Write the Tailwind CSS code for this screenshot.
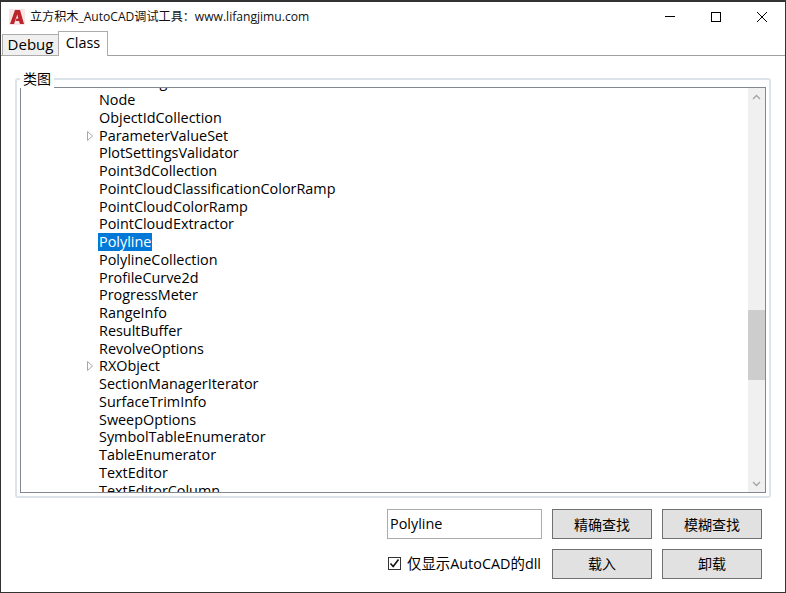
<!DOCTYPE html>
<html lang="zh-CN">
<head>
<meta charset="UTF-8">
<title>立方积木_AutoCAD调试工具</title>
<script src="https://cdn.jsdelivr.net/npm/@tailwindcss/browser@4"></script>
</head>
<body class="bg-white">
<div class="w-[786px] h-[593px] flex flex-col overflow-hidden bg-white border border-[#333] border-t-2 text-[14.4px] text-black font-['Open_Sans','Noto_Sans_CJK_SC',sans-serif]">

  <!-- title bar -->
  <div class="h-[30px] shrink-0 flex items-center">
    <svg class="ml-[8px] w-[16px] h-[16px]" viewBox="0 0 16 16"><rect width="16" height="16" rx="1" fill="#f8e4e4"/><path d="M1 15 L6 1 H11 L15 15 H11 L10 12 H6.5 L7.5 9.5 H9.3 L8.3 5.5 L5 15 Z" fill="#b8262c"/></svg>
    <span class="ml-[5px] text-[12.1px] leading-none text-[#111]">立方积木_AutoCAD调试工具：www.lifangjimu.com</span>
    <div class="ml-auto flex items-center h-full">
      <div class="w-[46px] flex justify-center"><svg class="w-[12px] h-[12px]" viewBox="0 0 12 12"><path d="M1 5.5H11" stroke="#000" fill="none"/></svg></div>
      <div class="w-[46px] flex justify-center"><svg class="w-[12px] h-[12px]" viewBox="0 0 12 12"><rect x="1.5" y="1.5" width="9" height="9" stroke="#000" fill="none"/></svg></div>
      <div class="w-[46px] flex justify-center"><svg class="w-[12px] h-[12px]" viewBox="0 0 12 12"><path d="M1 1L11 11M11 1L1 11" stroke="#000" fill="none"/></svg></div>
    </div>
  </div>

  <!-- tabs -->
  <div class="h-[24px] shrink-0 flex items-end pl-[1px] border-b border-[#a0a0a0]">
    <div class="w-[57px] h-[22px] -mb-px flex items-center justify-center pb-[2px] bg-[#f0f0f0] border border-[#acacac] text-[15px] leading-none">Debug</div>
    <div class="w-[50px] h-[25px] -mb-px -ml-px flex justify-center pt-[4px] bg-white border border-b-0 border-[#acacac] leading-none">Class</div>
  </div>

  <!-- tab pane -->
  <div class="flex-1 min-h-0 flex flex-col px-[14px]">
    <div class="relative mt-[22px] h-[420px] shrink-0 border-2 border-[#dce3ea] rounded-[3px] pt-[7px] px-[3px]">
      <span class="absolute left-[3px] -top-[10px] px-[3px] bg-white text-[14px] leading-[18px]">类图</span>
      <div class="h-[406px] flex border border-[#828790] bg-white">
        <div class="flex-1 min-w-0 overflow-hidden">
          <div class="-mt-[14.6px] leading-[17.75px]">
            <div class="pl-[78px] h-[17.75px] whitespace-nowrap">FileManager</div>
            <div class="pl-[78px] h-[17.75px] whitespace-nowrap">Node</div>
            <div class="pl-[78px] h-[17.75px] whitespace-nowrap">ObjectIdCollection</div>
            <div class="pl-[78px] h-[17.75px] whitespace-nowrap relative"><svg class="absolute left-[65px] top-[4px] w-[8px] h-[10px]" viewBox="0 0 8 10"><path d="M1.5 .5L6.5 5L1.5 9.5Z" fill="#fff" stroke="#a6a6a6"/></svg>ParameterValueSet</div>
            <div class="pl-[78px] h-[17.75px] whitespace-nowrap">PlotSettingsValidator</div>
            <div class="pl-[78px] h-[17.75px] whitespace-nowrap">Point3dCollection</div>
            <div class="pl-[78px] h-[17.75px] whitespace-nowrap">PointCloudClassificationColorRamp</div>
            <div class="pl-[78px] h-[17.75px] whitespace-nowrap">PointCloudColorRamp</div>
            <div class="pl-[78px] h-[17.75px] whitespace-nowrap">PointCloudExtractor</div>
            <div class="pl-[77px] h-[17.75px] whitespace-nowrap"><span class="inline-block bg-[#0078d7] text-white px-px">Polyline</span></div>
            <div class="pl-[78px] h-[17.75px] whitespace-nowrap">PolylineCollection</div>
            <div class="pl-[78px] h-[17.75px] whitespace-nowrap">ProfileCurve2d</div>
            <div class="pl-[78px] h-[17.75px] whitespace-nowrap">ProgressMeter</div>
            <div class="pl-[78px] h-[17.75px] whitespace-nowrap">RangeInfo</div>
            <div class="pl-[78px] h-[17.75px] whitespace-nowrap">ResultBuffer</div>
            <div class="pl-[78px] h-[17.75px] whitespace-nowrap">RevolveOptions</div>
            <div class="pl-[78px] h-[17.75px] whitespace-nowrap relative"><svg class="absolute left-[65px] top-[4px] w-[8px] h-[10px]" viewBox="0 0 8 10"><path d="M1.5 .5L6.5 5L1.5 9.5Z" fill="#fff" stroke="#a6a6a6"/></svg>RXObject</div>
            <div class="pl-[78px] h-[17.75px] whitespace-nowrap">SectionManagerIterator</div>
            <div class="pl-[78px] h-[17.75px] whitespace-nowrap">SurfaceTrimInfo</div>
            <div class="pl-[78px] h-[17.75px] whitespace-nowrap">SweepOptions</div>
            <div class="pl-[78px] h-[17.75px] whitespace-nowrap">SymbolTableEnumerator</div>
            <div class="pl-[78px] h-[17.75px] whitespace-nowrap">TableEnumerator</div>
            <div class="pl-[78px] h-[17.75px] whitespace-nowrap">TextEditor</div>
            <div class="pl-[78px] h-[17.75px] whitespace-nowrap">TextEditorColumn</div>
          </div>
        </div>
        <!-- scrollbar -->
        <div class="w-[17px] shrink-0 flex flex-col bg-[#f0f0f0]">
          <div class="h-[17px] flex items-center justify-center"><svg class="w-[9px] h-[6px]" viewBox="0 0 9 6"><path d="M1 5L4.5 1.5L8 5" stroke="#a3a3a3" stroke-width="1.3" fill="none"/></svg></div>
          <div class="mt-[205px] h-[70px] bg-[#cdcdcd]"></div>
          <div class="mt-auto h-[17px] flex items-center justify-center"><svg class="w-[9px] h-[6px]" viewBox="0 0 9 6"><path d="M1 1L4.5 4.5L8 1" stroke="#a3a3a3" stroke-width="1.3" fill="none"/></svg></div>
        </div>
      </div>
    </div>

    <!-- bottom controls -->
    <div class="mt-[11px] flex flex-col gap-[10px] items-end pr-[9px]">
      <div class="flex items-center gap-[10px]">
        <div class="w-[155px] h-[30px] border border-[#ababab] flex items-center px-[2px]">Polyline</div>
        <div class="w-[100px] h-[30px] flex items-center justify-center bg-[#e1e1e1] border border-[#707070] text-[14px]">精确查找</div>
        <div class="w-[100px] h-[30px] flex items-center justify-center bg-[#e1e1e1] border border-[#707070] text-[14px]">模糊查找</div>
      </div>
      <div class="flex items-center gap-[10px]">
        <div class="w-[155px] flex items-center gap-[6px] pl-[1px] whitespace-nowrap">
          <div class="w-[13px] h-[13px] shrink-0 border border-[#333] flex items-center justify-center"><svg class="w-[11px] h-[11px]" viewBox="0 0 11 11"><path d="M1.5 5.5L4.2 8.5L9.5 1.5" stroke="#111" stroke-width="1.6" fill="none"/></svg></div>
          <span>仅显示AutoCAD的dll</span>
        </div>
        <div class="w-[100px] h-[30px] flex items-center justify-center pb-px bg-[#e1e1e1] border border-[#707070] text-[14px]">载入</div>
        <div class="w-[100px] h-[30px] flex items-center justify-center pb-px bg-[#e1e1e1] border border-[#707070] text-[14px]">卸载</div>
      </div>
    </div>
  </div>
</div>
</body>
</html>
